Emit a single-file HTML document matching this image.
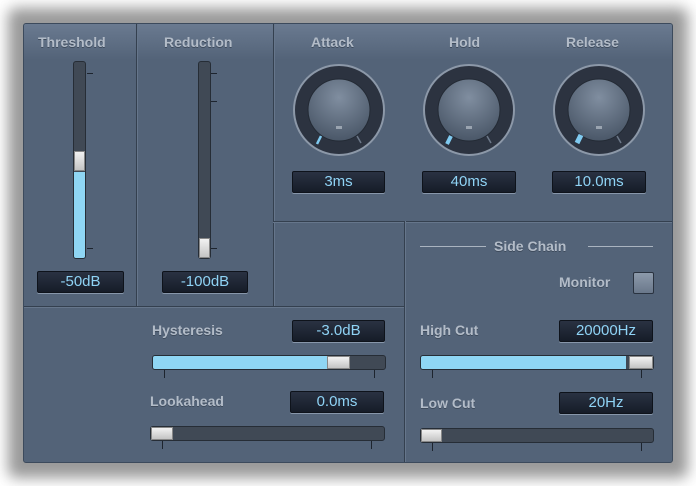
<!DOCTYPE html>
<html><head><style>
*{margin:0;padding:0;box-sizing:border-box}
body{width:696px;height:486px;background:#fff;position:relative;overflow:hidden;font-family:"Liberation Sans",sans-serif}
.shadow{position:absolute;left:8px;top:8px;width:680px;height:470px;background:#9a9a9a;filter:blur(7px);border-radius:8px}
.panel{position:absolute;left:23px;top:23px;width:650px;height:440px;background:#536378;border:1px solid #3c4a5c;border-radius:3px;overflow:hidden}
.hd{position:absolute;left:0;top:0;width:650px;height:36px;background:linear-gradient(#6a7a90,#536378)}
.a{position:absolute}
.lbl{position:absolute;color:#b3bcc8;font-weight:bold;font-size:14px;text-shadow:0 1px 0 #3e4b5c;white-space:nowrap}
.vl{position:absolute;width:1px;background:#34404f;box-shadow:1px 0 0 #66768b}
.hl{position:absolute;height:1px;background:#34404f;box-shadow:0 1px 0 #66768b}
.disp{position:absolute;height:22px;background:linear-gradient(#2a3242,#161c28);border:1px solid #0e131b;border-radius:2px;color:#8fd3f5;font-size:15px;text-align:center;line-height:20px;box-shadow:0 1px 0 #8796aa}
.vtrack{position:absolute;width:13px;background:#404955;border:1px solid #262d36;border-radius:3px}
.htrack{position:absolute;height:15px;background:#404955;border:1px solid #262d36;border-radius:3px;overflow:hidden}
.fill{position:absolute;background:#8fd6f4}
.thumb{position:absolute;background:linear-gradient(#f2f2f2,#c4c4c4);border:1px solid #888}
.tick{position:absolute;background:#1d242e}
</style></head><body>
<div class="shadow"></div>
<div class="panel">
<div class="hd"></div>
<div class="vl" style="left:112px;top:0;height:282px"></div>
<div class="vl" style="left:249px;top:0;height:282px"></div>
<div class="hl" style="left:249px;top:197px;width:401px"></div>
<div class="hl" style="left:0;top:282px;width:380px"></div>
<div class="vl" style="left:380px;top:197px;height:243px"></div>

<div class="lbl" style="left:14px;top:10px">Threshold</div>
<div class="lbl" style="left:140px;top:10px">Reduction</div>
<div class="lbl" style="left:287px;top:10px">Attack</div>
<div class="lbl" style="left:425px;top:10px">Hold</div>
<div class="lbl" style="left:542px;top:10px">Release</div>

<div class="vtrack" style="left:49px;top:37px;height:198px;overflow:hidden"><div class="fill" style="left:0;right:0;top:110px;bottom:0"></div></div>
<div class="thumb" style="left:50px;top:127px;width:11px;height:20px"></div>
<div class="tick" style="left:63px;top:49px;width:6px;height:1px"></div>
<div class="tick" style="left:63px;top:224px;width:6px;height:1px"></div>
<div class="vtrack" style="left:174px;top:37px;height:198px"></div>
<div class="thumb" style="left:175px;top:214px;width:11px;height:20px"></div>
<div class="tick" style="left:187px;top:49px;width:6px;height:1px"></div>
<div class="tick" style="left:187px;top:77px;width:6px;height:1px"></div>
<div class="tick" style="left:187px;top:224px;width:6px;height:1px"></div>
<div class="disp" style="left:13px;top:247px;width:87px">-50dB</div>
<div class="disp" style="left:138px;top:247px;width:86px">-100dB</div>

<svg class="a" style="left:0;top:0" width="650" height="200">
<defs><radialGradient id="kg" cx="50%" cy="30%" r="70%"><stop offset="0" stop-color="#808ea0"/><stop offset="1" stop-color="#4a5768"/></radialGradient></defs>
<g id="k1">
<circle cx="315" cy="86" r="45" fill="#2c3340" stroke="#8c98a8" stroke-width="2"/>
<circle cx="315" cy="86" r="31" fill="url(#kg)" stroke="#232a34" stroke-width="1"/>
<rect x="312" y="102" width="6" height="3" fill="#9aa4b0"/>
</g>
<circle cx="445" cy="86" r="45" fill="#2c3340" stroke="#8c98a8" stroke-width="2"/>
<circle cx="445" cy="86" r="31" fill="url(#kg)" stroke="#232a34"/>
<rect x="442" y="102" width="6" height="3" fill="#9aa4b0"/>
<circle cx="575" cy="86" r="45" fill="#2c3340" stroke="#8c98a8" stroke-width="2"/>
<circle cx="575" cy="86" r="31" fill="url(#kg)" stroke="#232a34"/>
<rect x="572" y="102" width="6" height="3" fill="#9aa4b0"/>
<g stroke="#7fcaf0"><line x1="297" y1="112" x2="293" y2="120" stroke-width="2.5"/><line x1="427" y1="112" x2="423" y2="120" stroke-width="4"/><line x1="557" y1="111" x2="553" y2="119" stroke-width="5"/></g>
<g stroke="#6c7888" stroke-width="1.5"><line x1="333" y1="112" x2="337" y2="119"/><line x1="463" y1="112" x2="467" y2="119"/><line x1="593" y1="112" x2="597" y2="119"/></g>
</svg>
<div class="disp" style="left:268px;top:147px;width:93px">3ms</div>
<div class="disp" style="left:398px;top:147px;width:94px">40ms</div>
<div class="disp" style="left:528px;top:147px;width:94px">10.0ms</div>

<div class="a" style="left:396px;top:222px;width:66px;height:1px;background:#aab4c0"></div>
<div class="lbl" style="left:470px;top:214px">Side Chain</div>
<div class="a" style="left:564px;top:222px;width:65px;height:1px;background:#aab4c0"></div>
<div class="lbl" style="left:535px;top:250px">Monitor</div>
<div class="a" style="left:609px;top:248px;width:21px;height:22px;background:linear-gradient(#8d9aab,#6a788b);border:1px solid #2a3340;border-radius:2px"></div>

<div class="lbl" style="left:128px;top:298px">Hysteresis</div>
<div class="disp" style="left:268px;top:296px;width:93px">-3.0dB</div>
<div class="htrack" style="left:128px;top:331px;width:234px"><div class="fill" style="left:0;top:0;bottom:0;width:175px"></div></div>
<div class="thumb" style="left:303px;top:332px;width:23px;height:13px"></div>
<div class="tick" style="left:140px;top:346px;width:1px;height:8px"></div>
<div class="tick" style="left:350px;top:346px;width:1px;height:8px"></div>

<div class="lbl" style="left:126px;top:369px">Lookahead</div>
<div class="disp" style="left:266px;top:367px;width:94px">0.0ms</div>
<div class="htrack" style="left:126px;top:402px;width:235px"></div>
<div class="thumb" style="left:127px;top:403px;width:22px;height:13px"></div>
<div class="tick" style="left:138px;top:417px;width:1px;height:8px"></div>
<div class="tick" style="left:347px;top:417px;width:1px;height:8px"></div>

<div class="lbl" style="left:396px;top:298px">High Cut</div>
<div class="disp" style="left:535px;top:296px;width:94px">20000Hz</div>
<div class="htrack" style="left:396px;top:331px;width:234px"><div class="fill" style="left:0;top:0;bottom:0;width:205px"></div></div>
<div class="thumb" style="left:605px;top:332px;width:24px;height:13px"></div>
<div class="tick" style="left:408px;top:346px;width:1px;height:8px"></div>
<div class="tick" style="left:617px;top:346px;width:1px;height:8px"></div>

<div class="lbl" style="left:396px;top:371px">Low Cut</div>
<div class="disp" style="left:535px;top:368px;width:94px">20Hz</div>
<div class="htrack" style="left:396px;top:404px;width:234px"></div>
<div class="thumb" style="left:397px;top:405px;width:21px;height:13px"></div>
<div class="tick" style="left:408px;top:419px;width:1px;height:8px"></div>
<div class="tick" style="left:617px;top:419px;width:1px;height:8px"></div>
</div>
</body></html>
